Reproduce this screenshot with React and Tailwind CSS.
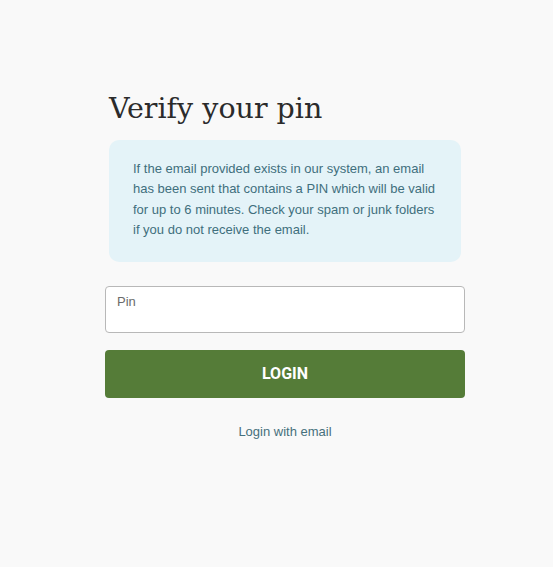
export default function App() {
  return (
    <div className="min-h-[567px] w-full bg-[#f9f9f9] font-['Liberation_Sans',Arial,sans-serif]">
      <div className="ml-[105px] w-[360px] pt-[90px]">
        <div className="px-1">
          <h1 className="font-['DejaVu_Serif','Liberation_Serif',serif] text-[28.5px] leading-[38px] text-[#2b2b2b]">
            Verify your pin
          </h1>
          <div className="mt-[12px] rounded-[10px] bg-[#e4f3f8] pl-6 pr-6 pt-[19px] pb-[21px] text-[13px] leading-[20.4px] text-[#3f6f7d]">
            If the email provided exists in our system, an email has been sent that contains a PIN which will be valid for up to 6 minutes. Check your spam or junk folders if you do not receive the email.
          </div>
        </div>
        <div className="mt-[24px] h-[47px] rounded-[4px] border border-[#b8b8b8] bg-white px-[11px] pt-[6px]">
          <label className="block text-[13px] leading-[18px] text-[#6b6b6b]">Pin</label>
          <input className="w-full bg-transparent text-[14px] outline-none" />
        </div>
        <button className="mt-[17px] flex h-[48px] w-full items-center justify-center rounded-[4px] bg-[#557c38] font-['Roboto',sans-serif] text-[16px] font-bold text-white">
          LOGIN
        </button>
        <div className="mt-[25px] text-center text-[13px] leading-[18px] text-[#46707c]">
          Login with email
        </div>
      </div>
    </div>
  );
}
